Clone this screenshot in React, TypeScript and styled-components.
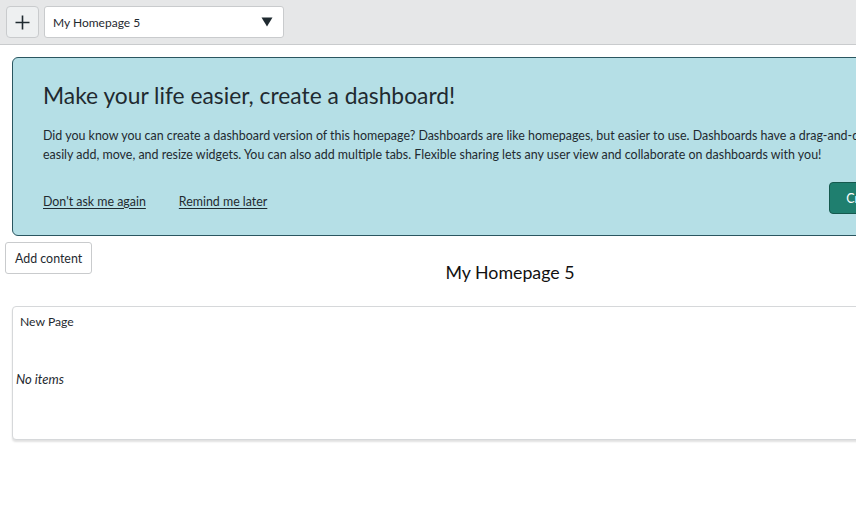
import React from "react";
import styled, { createGlobalStyle } from "styled-components";

const Global = createGlobalStyle`
  html, body { margin: 0; padding: 0; background: #fff; overflow: hidden; }
  body { font-family: Lato, "Liberation Sans", sans-serif; color: #1f2a30; }
  * { box-sizing: border-box; }
`;

const Page = styled.div`
  width: 1020px;
  min-height: 514px;
`;

const TopBar = styled.div`
  height: 45px;
  background: #e6e7e8;
  border-bottom: 1px solid #c9cbcd;
  display: flex;
  align-items: flex-start;
  gap: 5px;
  padding: 6px;
`;

const IconButton = styled.button`
  width: 33px;
  height: 32px;
  border: 1px solid #c9cbcd;
  border-radius: 4px;
  background: #eef0f1;
  display: flex;
  align-items: center;
  justify-content: center;
  padding: 0;
`;

const Select = styled.div`
  width: 240px;
  height: 32px;
  border: 1px solid #c9cbcd;
  border-radius: 3px;
  background: #fff;
  display: flex;
  align-items: center;
  justify-content: space-between;
  padding: 0 10px 0 8px;
  font-size: 12px;
  color: #1f2a30;
`;

const Main = styled.div`
  padding: 12px 12px 0 12px;
`;

const Banner = styled.section`
  background: #b5dfe6;
  border: 1px solid #2a5660;
  border-radius: 6px;
  padding: 21px 47px 20px 30px;
  height: 179px;
`;

const BannerTitle = styled.h2`
  margin: 0;
  font-size: 22.8px;
  font-weight: 400;
  line-height: 32px;
  color: #1f2a30;
`;

const BannerText = styled.p`
  margin: 15px 0 0 0;
  font-size: 12.45px;
  line-height: 19px;
  white-space: nowrap;
  color: #1f2a30;
`;

const BannerFooter = styled.div`
  display: flex;
  align-items: center;
  margin-top: 18px;
  gap: 33px;
`;

const LinkButton = styled.a`
  font-size: 12.4px;
  padding-top: 6px;
  color: #1f2a30;
  text-decoration: underline;
  text-underline-offset: 2px;
`;

const PrimaryButton = styled.button`
  margin-left: auto;
  height: 32px;
  padding: 0 16px;
  background: #1f7f6f;
  border: 1px solid #15594e;
  border-radius: 4px;
  color: #fff;
  font-family: inherit;
  font-size: 12.5px;
`;

const HeaderRow = styled.div`
  display: grid;
  grid-template-columns: 1fr auto 1fr;
  margin: 6px -7px 0 -7px;
`;

const SecondaryButton = styled.button`
  justify-self: start;
  align-self: start;
  height: 32px;
  padding: 0 9px;
  background: #fff;
  border: 1px solid #c9cbcd;
  border-radius: 3px;
  font-family: inherit;
  font-size: 12.4px;
  color: #1f2a30;
`;

const PageTitle = styled.h1`
  margin: 18px 0 0 0;
  font-size: 17.8px;
  font-weight: 400;
  line-height: 24px;
  color: #111;
`;

const Card = styled.div`
  margin-top: 22px;
  height: 134px;
  border: 1px solid #d6d8da;
  border-radius: 4px;
  box-shadow: 0 2px 2px rgba(0, 0, 0, 0.12);
  background: #fff;
  padding: 7px 0 0 0;
`;

const CardTitle = styled.div`
  font-size: 12.2px;
  line-height: 16px;
  padding-left: 7px;
  color: #1f2a30;
`;

const EmptyText = styled.div`
  margin-top: 41px;
  font-size: 13px;
  line-height: 16px;
  font-style: italic;
  padding-left: 3px;
  color: #1f2a30;
`;

export default function App() {
  return (
    <Page>
      <Global />
      <TopBar>
        <IconButton aria-label="Add">
          <svg width="15" height="15" viewBox="0 0 15 15">
            <path d="M7.5 0.5v14M0.5 7.5h14" stroke="#1f2a30" strokeWidth="1.6" />
          </svg>
        </IconButton>
        <Select>
          <span>My Homepage 5</span>
          <svg width="12" height="10" viewBox="0 0 12 10">
            <path d="M0.5 0.5h11L6 9.5z" fill="#1f2a30" />
          </svg>
        </Select>
      </TopBar>
      <Main>
        <Banner>
          <BannerTitle>Make your life easier, create a dashboard!</BannerTitle>
          <BannerText>
            Did you know you can create a dashboard version of this homepage? Dashboards are like homepages, but easier to use. Dashboards have a drag-and-drop interface so you can
            <br />
            easily add, move, and resize widgets. You can also add multiple tabs. Flexible sharing lets any user view and collaborate on dashboards with you!
          </BannerText>
          <BannerFooter>
            <LinkButton>Don't ask me again</LinkButton>
            <LinkButton>Remind me later</LinkButton>
            <PrimaryButton>Create dashboard</PrimaryButton>
          </BannerFooter>
        </Banner>
        <HeaderRow>
          <SecondaryButton>Add content</SecondaryButton>
          <PageTitle>My Homepage 5</PageTitle>
          <span />
        </HeaderRow>
        <Card>
          <CardTitle>New Page</CardTitle>
          <EmptyText>No items</EmptyText>
        </Card>
      </Main>
    </Page>
  );
}
